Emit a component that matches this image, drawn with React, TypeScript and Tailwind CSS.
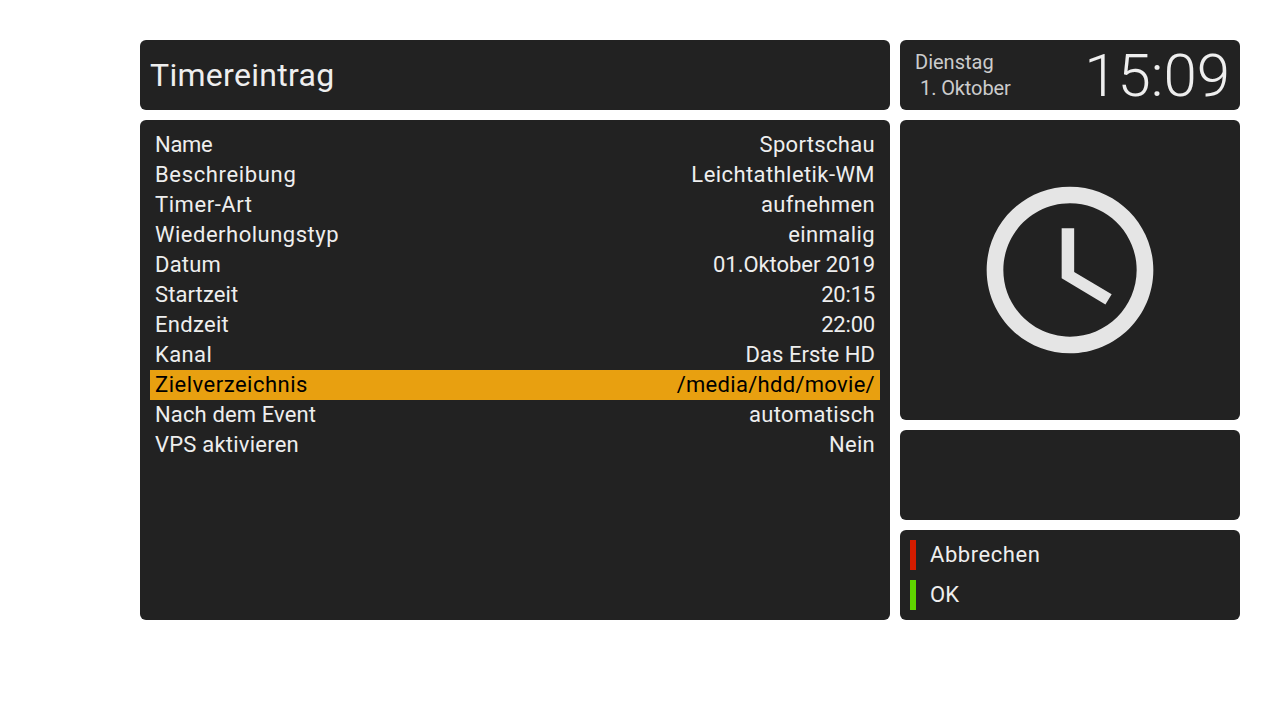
type Row = { label: string; value: string; labelFit: string; valueFit: string };

// tracking per row: the screenshot's Roboto build has wider letters and narrower digits
const rows: Row[] = [
  { label: 'Name', value: 'Sportschau', labelFit: 'tracking-[-0.3px]', valueFit: 'tracking-[0.32px]' },
  { label: 'Beschreibung', value: 'Leichtathletik-WM', labelFit: 'tracking-[0.65px]', valueFit: 'tracking-[0.42px]' },
  { label: 'Timer-Art', value: 'aufnehmen', labelFit: 'tracking-[0.55px]', valueFit: 'tracking-[0.36px]' },
  { label: 'Wiederholungstyp', value: 'einmalig', labelFit: 'tracking-[0.5px]', valueFit: 'tracking-[0.42px]' },
  { label: 'Datum', value: '01.Oktober 2019', labelFit: 'tracking-[0.2px]', valueFit: 'tracking-[-0.05px]' },
  { label: 'Startzeit', value: '20:15', labelFit: 'tracking-[0.1px]', valueFit: 'tracking-[-0.2px]' },
  { label: 'Endzeit', value: '22:00', labelFit: 'tracking-[0.3px]', valueFit: 'tracking-[-0.2px]' },
  { label: 'Kanal', value: 'Das Erste HD', labelFit: 'tracking-[0.4px]', valueFit: 'tracking-[0.04px]' },
  { label: 'Zielverzeichnis', value: '/media/hdd/movie/', labelFit: 'tracking-[0.5px]', valueFit: 'tracking-[0.3px]' },
  { label: 'Nach dem Event', value: 'automatisch', labelFit: 'tracking-[0.13px]', valueFit: 'tracking-[0.32px]' },
  { label: 'VPS aktivieren', value: 'Nein', labelFit: 'tracking-[0.22px]', valueFit: 'tracking-[0.3px]' },
];

const selected = 'Zielverzeichnis';

export default function App() {
  return (
    <div className="flex h-[720px] w-[1280px] gap-[10px] bg-white pl-[140px] pt-10 font-['Roboto',sans-serif] text-[#eeeeee]">
      <div className="flex w-[750px] flex-col gap-[10px]">
        <header className="flex h-[70px] items-center rounded-md bg-[#222222] px-[10px] text-[32px] tracking-[0.3px]">Timereintrag</header>
        <ul className="h-[500px] rounded-md bg-[#222222] px-[10px] py-[10px] text-[22px]">
          {rows.map((row) => (
            <li
              key={row.label}
              className={`flex h-[30px] items-center justify-between px-[5px] pb-[2px] ${row.label === selected ? 'bg-[#e8a010] text-black' : ''}`}
            >
              <span className={row.labelFit}>{row.label}</span>
              <span className={row.valueFit}>{row.value}</span>
            </li>
          ))}
        </ul>
      </div>

      <div className="flex w-[340px] flex-col gap-[10px]">
        <div className="flex h-[70px] items-center justify-between rounded-md bg-[#222222] pl-[15px] pr-[10px]">
          <div className="text-[20px] leading-[26px] text-[#cccccc]">
            <div>Dienstag</div>
            <div className="pl-[5px] tracking-[-0.1px]">1. Oktober</div>
          </div>
          <div className="pt-[2px] text-[60px] font-light">15:09</div>
        </div>
        <div className="flex h-[300px] items-center justify-center rounded-md bg-[#222222]">
          <svg width="200" height="200" viewBox="0 0 24 24" fill="#e5e5e5">
            <path d="M11.99 2C6.47 2 2 6.48 2 12s4.47 10 9.99 10C17.52 22 22 17.52 22 12S17.52 2 11.99 2zM12 20c-4.42 0-8-3.58-8-8s3.58-8 8-8 8 3.58 8 8-3.58 8-8 8zm.5-13H11v6l5.25 3.15.75-1.23-4.5-2.67z" />
          </svg>
        </div>
        <div className="h-[90px] rounded-md bg-[#222222]" />
        <div className="flex h-[90px] flex-col gap-[10px] rounded-md bg-[#222222] p-[10px] text-[22px]">
          <div className="flex h-[30px] items-center gap-[14px] pb-[2px]">
            <span className="h-[30px] w-[6px] translate-y-[1px] bg-[#d41c00]" />
            <span className="tracking-[0.55px]">Abbrechen</span>
          </div>
          <div className="flex h-[30px] items-center gap-[14px] pb-[2px]">
            <span className="h-[30px] w-[6px] translate-y-[1px] bg-[#5fd400]" />
            <span>OK</span>
          </div>
        </div>
      </div>
    </div>
  );
}
